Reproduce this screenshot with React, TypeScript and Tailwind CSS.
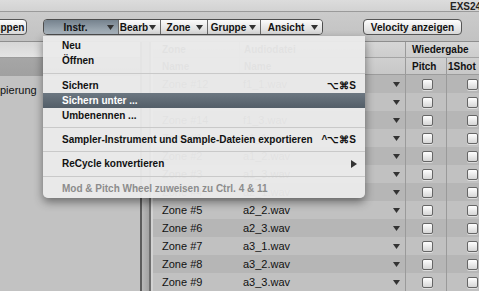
import React from "react";

const Arrow = ({ className = "" }: { className?: string }) => (
  <svg width="7" height="5" viewBox="0 0 7 5" className={className}>
    <polygon points="0,0 7,0 3.5,5" fill="#333" />
  </svg>
);

const Checkbox = () => (
  <div className="w-[11px] h-[11px] rounded-[2px] border border-[#666] bg-gradient-to-b from-[#ffffff] to-[#d6d6d6] shadow-[0_1px_0_rgba(255,255,255,0.5)]" />
);

const rows: [string, string][] = [
  ["Zone #12", "f1_1.wav"],
  ["Zone #13", "f1_2.wav"],
  ["Zone #14", "f1_3.wav"],
  ["Zone #1", "a1_1.wav"],
  ["Zone #2", "a1_2.wav"],
  ["Zone #3", "a1_3.wav"],
  ["Zone #4", "a2_1.wav"],
  ["Zone #5", "a2_2.wav"],
  ["Zone #6", "a2_3.wav"],
  ["Zone #7", "a3_1.wav"],
  ["Zone #8", "a3_2.wav"],
  ["Zone #9", "a3_3.wav"],
];

const Seg = ({
  label,
  w,
  pressed,
  last,
}: {
  label: string;
  w: string;
  pressed?: boolean;
  last?: boolean;
}) => (
  <div
    className={`${w} shrink-0 h-full flex items-center pr-[4px] ${last ? "" : "border-r border-[#6a6a6a]"} ${
      pressed
        ? "bg-gradient-to-b from-[#76838e] to-[#aab5be]"
        : "bg-gradient-to-b from-[#fbfbfb] to-[#d6d6d6]"
    }`}
  >
    <span className="flex-1 text-center">{label}</span>
    <Arrow />
  </div>
);

const MenuItem = ({
  label,
  shortcut,
  h = "h-[15px]",
  active,
  disabled,
  submenu,
}: {
  label: string;
  shortcut?: string;
  h?: string;
  active?: boolean;
  disabled?: boolean;
  submenu?: boolean;
}) => (
  <div
    className={`${h} flex items-center pl-[19px] pr-[9px] whitespace-nowrap ${
      active ? "bg-gradient-to-b from-[#6c7781] to-[#535e68] text-white" : disabled ? "text-[#8c8c8c]" : "text-[#111]"
    }`}
  >
    <span className="flex-1">{label}</span>
    {shortcut && <span>{shortcut}</span>}
    {submenu && (
      <svg width="6" height="8" viewBox="0 0 6 8" className="mr-[-1px]">
        <polygon points="0,0 6,4 0,8" fill="#333" />
      </svg>
    )}
  </div>
);

const Sep = ({ h }: { h: string }) => (
  <div className={`${h} flex items-center`}>
    <div className="w-full h-px bg-[#c9c9c9]" />
  </div>
);

export default function App() {
  return (
    <div className="w-[479px] h-[291px] overflow-hidden relative bg-[#c1c1c1] font-['Liberation_Sans',Arial,sans-serif] text-[#111] flex flex-col">
      {/* title bar */}
      <div className="h-[11px] shrink-0 bg-gradient-to-b from-[#dcdcdc] to-[#d2d2d2] pl-[450px] whitespace-nowrap overflow-hidden text-[10px] font-bold leading-[11px] pt-[1px] text-[#222]">
        EXS24-Instrument-Editor
      </div>
      <div className="h-px shrink-0 bg-[#9a9a9a]" />
      {/* toolbar */}
      <div className="h-[29px] shrink-0 bg-gradient-to-b from-[#cbcbcb] to-[#c2c2c2] flex items-start pt-[7px] text-[10px] font-bold">
        <div className="ml-[-20px] w-[47px] shrink-0 h-[16px] rounded-[4px] border border-[#555] bg-gradient-to-b from-[#fdfdfd] to-[#d8d8d8] flex items-center justify-center">
          Gruppen
        </div>
        <div className="ml-[16px] w-[280px] shrink-0 h-[16px] rounded-[4px] border border-[#4d4d4d] overflow-hidden flex">
          <Seg label="Instr." w="w-[75px]" pressed />
          <Seg label="Bearb" w="w-[42px]" />
          <Seg label="Zone" w="w-[47px]" />
          <Seg label="Gruppe" w="w-[53px]" />
          <Seg label="Ansicht" w="w-[61px]" last />
        </div>
        <div className="ml-[40px] w-[99px] shrink-0 h-[16px] rounded-[4px] border border-[#555] bg-gradient-to-b from-[#fdfdfd] to-[#d8d8d8] flex items-center justify-center">
          Velocity anzeigen
        </div>
      </div>
      <div className="h-px shrink-0 bg-[#8e8e8e]" />
      {/* main */}
      <div className="flex-1 flex min-h-0">
        {/* left panel */}
        <div className="w-[140px] shrink-0 flex flex-col bg-[#c2c2c2]">
          <div className="h-[16px] bg-gradient-to-b from-[#d6d6d6] to-[#e4e4e4] border-b border-[#9c9c9c]" />
          <div className="h-[18px] bg-gradient-to-b from-[#a6a6a6] to-[#a0a0a0]" />
          <div className="h-[28px] flex items-center pt-[1px] text-[11px] whitespace-nowrap">pierung</div>
        </div>
        {/* splitter */}
        <div className="w-[13px] shrink-0 flex">
          <div className="w-[2px] bg-[#5c5c5c]" />
          <div className="w-[7px] bg-gradient-to-r from-[#b8b8b8] to-[#a2a2a2]" />
          <div className="w-[2px] bg-[#6e6e6e]" />
          <div className="w-[2px] bg-[#d2d2d2]" />
        </div>
        {/* table */}
        <div className="flex-1 flex flex-col min-w-0 overflow-hidden">
          <div className="h-[16px] shrink-0 flex bg-gradient-to-b from-[#d6d6d6] to-[#cdcdcd] border-b border-[#a4a4a4] text-[10px] font-bold items-stretch whitespace-nowrap">
            <div className="w-[87px] shrink-0 pl-[9px] flex items-center border-r border-[#b4b4b4]">Zone</div>
            <div className="w-[165px] shrink-0 pl-[4px] flex items-center">Audiodatei</div>
            <div className="w-[100px] shrink-0 pl-[6px] flex items-center border-l border-[#9a9a9a]">Wiedergabe</div>
          </div>
          <div className="h-[17px] shrink-0 flex bg-gradient-to-b from-[#d0d0d0] to-[#c8c8c8] border-b border-[#9c9c9c] text-[10px] font-bold items-stretch whitespace-nowrap">
            <div className="w-[87px] shrink-0 pl-[9px] flex items-center border-r border-[#b4b4b4]">Name</div>
            <div className="w-[165px] shrink-0 pl-[4px] flex items-center">Name</div>
            <div className="w-[41px] shrink-0 pl-[6px] flex items-center border-l border-[#9a9a9a]">Pitch</div>
            <div className="w-[51px] shrink-0 pl-[1px] flex items-center border-l border-[#9a9a9a]">1Shot</div>
          </div>
          {rows.map(([z, f], i) => (
            <div
              key={i}
              className={`h-[18px] shrink-0 flex items-stretch text-[11px] whitespace-nowrap ${
                i % 2 === 0 ? "bg-[#b6b6b6]" : "bg-[#c1c1c1]"
              }`}
            >
              <div className="w-[87px] shrink-0 pl-[9px] flex items-center">{z}</div>
              <div className="w-[165px] shrink-0 pl-[3px] pr-[5px] flex items-center justify-between">
                <span>{f}</span>
                <Arrow />
              </div>
              <div className="w-[41px] shrink-0 flex items-center justify-center pl-[3px] border-l border-[#9a9a9a]">
                <Checkbox />
              </div>
              <div className="w-[51px] shrink-0 flex items-center justify-center pl-[1px] border-l border-[#9a9a9a]">
                <Checkbox />
              </div>
            </div>
          ))}
        </div>
      </div>

      {/* dropdown menu */}
      <div className="absolute left-[43px] top-[36px] w-[322px] pt-[1px] pb-[2px] bg-[rgba(234,234,234,0.96)] rounded-b-[5px] shadow-[0_4px_10px_rgba(0,0,0,0.45)] text-[10px] font-bold">
        <MenuItem label="Neu" h="h-[16px]" />
        <MenuItem label="Öffnen" />
        <Sep h="h-[10px]" />
        <MenuItem label="Sichern" shortcut="⌥⌘S" />
        <MenuItem label="Sichern unter ..." active />
        <MenuItem label="Umbenennen ..." />
        <Sep h="h-[9px]" />
        <MenuItem label="Sampler-Instrument und Sample-Dateien exportieren" shortcut="^⌥⌘S" />
        <Sep h="h-[9px]" />
        <MenuItem label="ReCycle konvertieren" submenu />
        <Sep h="h-[10px]" />
        <MenuItem label="Mod & Pitch Wheel zuweisen zu Ctrl. 4 & 11" disabled />
      </div>
    </div>
  );
}
